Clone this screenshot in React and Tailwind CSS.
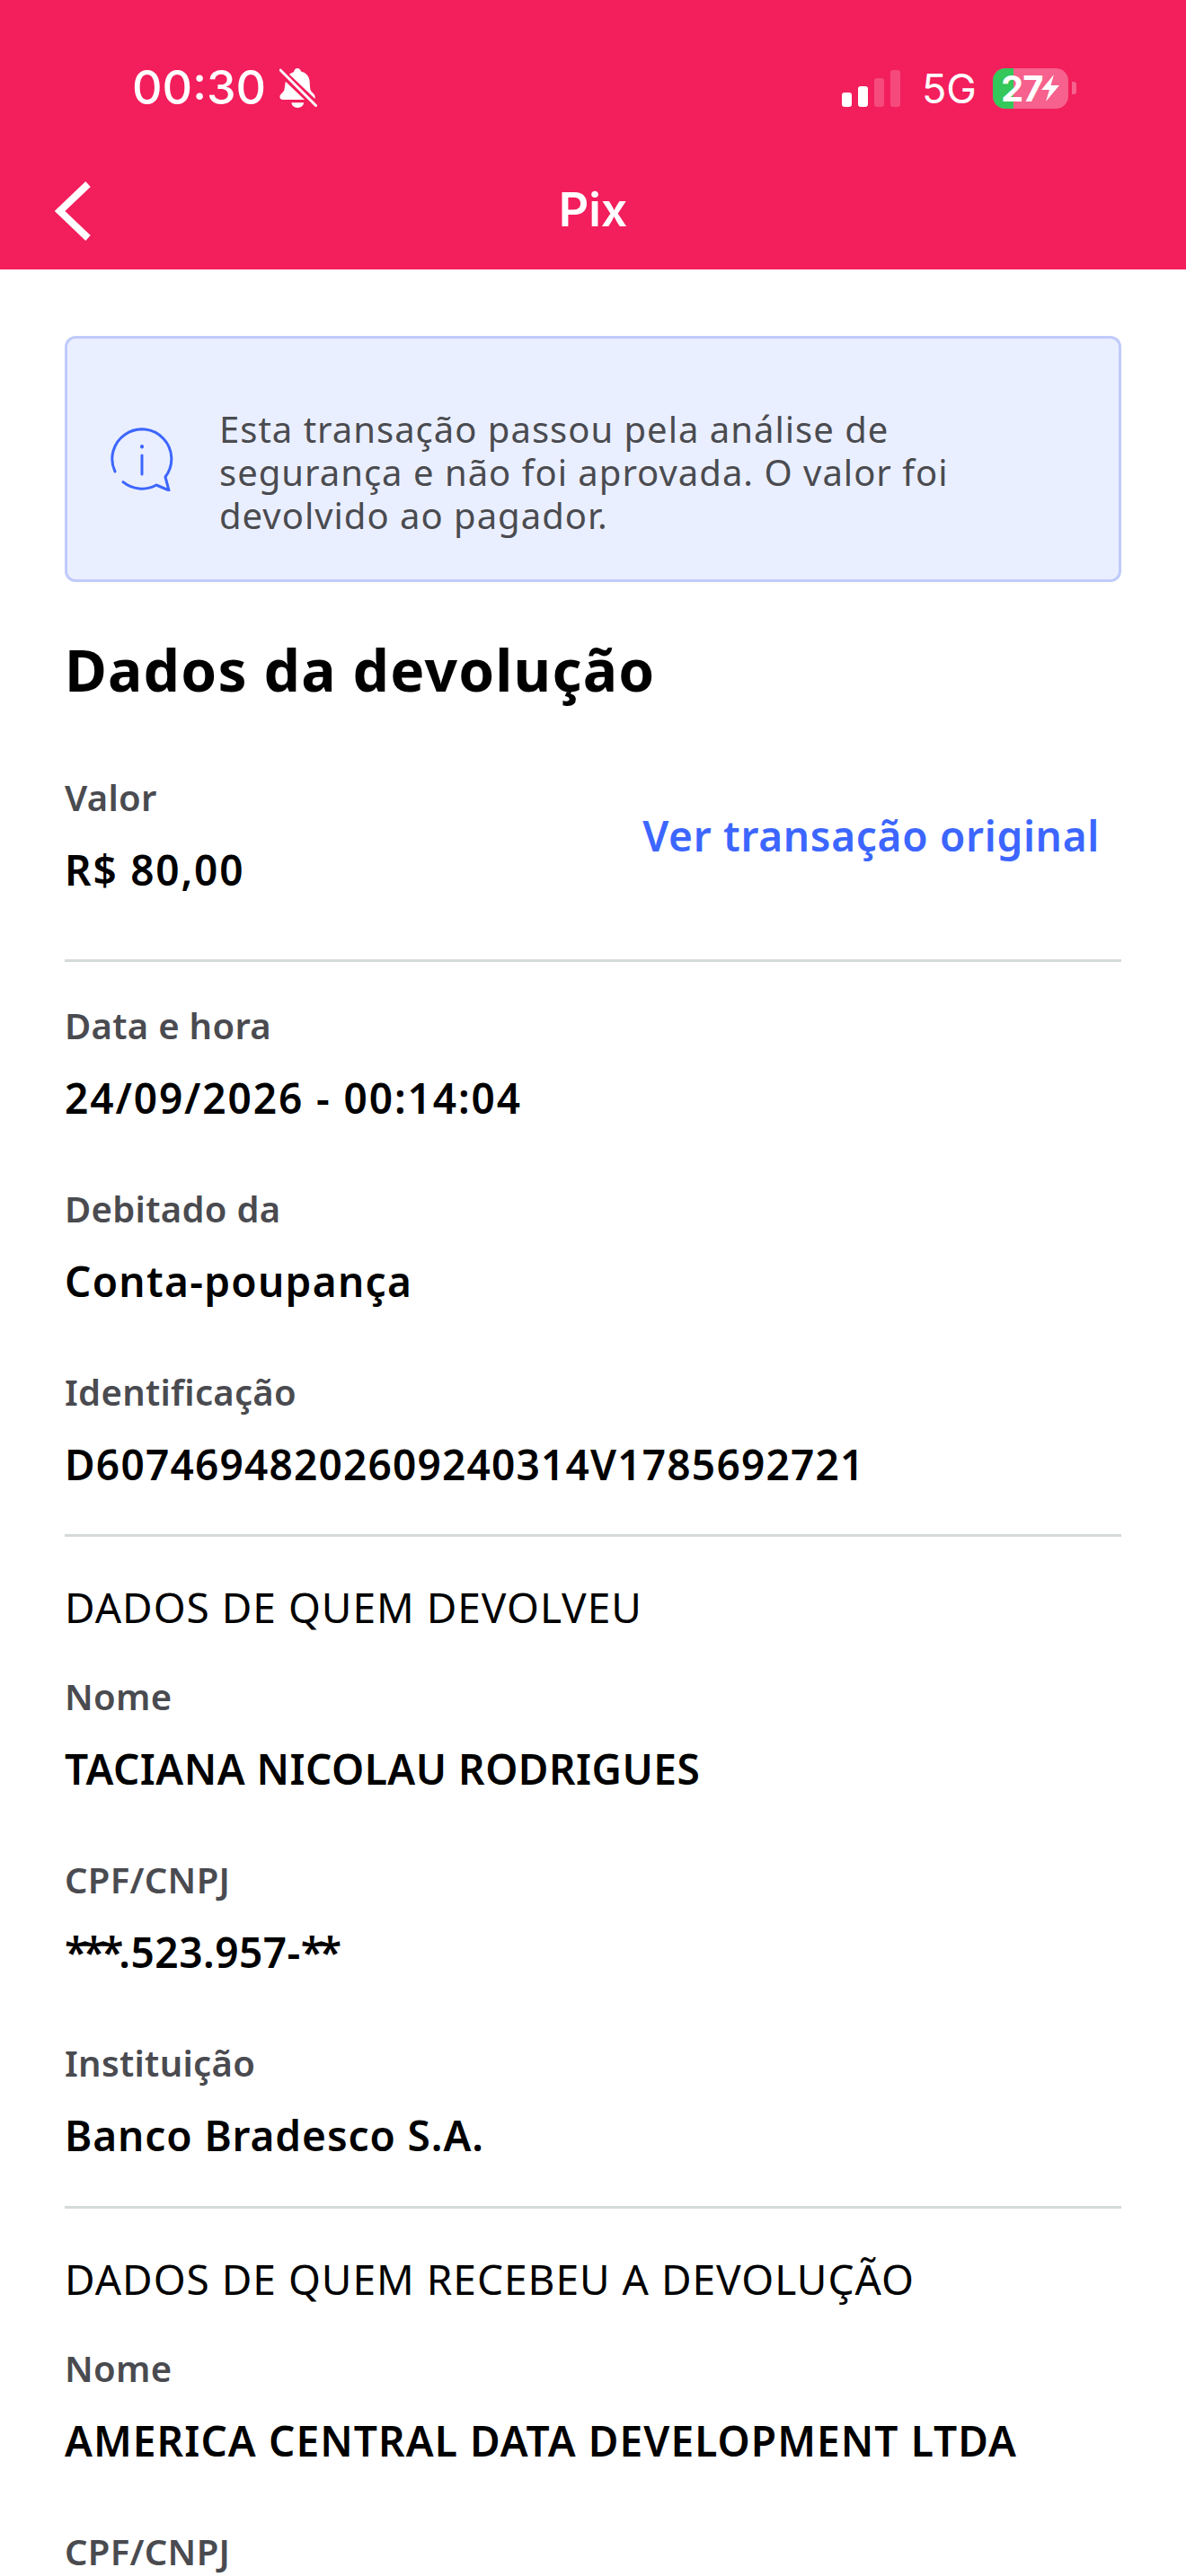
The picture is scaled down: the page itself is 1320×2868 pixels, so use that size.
import React from 'react';

const Field = ({ label, value, className = '', valueClass = 'tracking-[1px]' }) => (
  <div className={className}>
    <p className="h-12 text-[40px] leading-[48px] font-semibold tracking-[0.3px] text-[#4a4b50]">{label}</p>
    {value && (
      <p className={`mt-[28px] h-14 text-[46px] leading-[56px] font-semibold text-black whitespace-nowrap ${valueClass}`}>{value}</p>
    )}
  </div>
);

const Divider = ({ className = '' }) => <div className={`h-[3px] bg-[#d5dada] ${className}`} />;

const Section = ({ title, className = '' }) => (
  <p className={`h-14 text-[46px] leading-[56px] tracking-[1px] text-black whitespace-nowrap ${className}`}>{title}</p>
);

const BellOff = () => (
  <svg width="42" height="44" viewBox="0 0 42 44" fill="white" className="ml-[15px]">
    <path d="M1 2 L40.5 41.5" stroke="white" strokeWidth="3" strokeLinecap="round" />
    <path d="M11 6.7 C13 5 15 4.5 16 4 C16.5 1.5 18 0 20 0 C22 0 23.5 1.5 24 3.5 C30 5 33 9 33.6 14 C34 20 34 23 35 25 C36.5 27.5 40.5 29 39.6 34 Z" />
    <path d="M6.8 14.7 L28 35 L4 35 C1.5 35 0 33.5 0.5 31 C1 28.5 4.5 27 5.4 24 C6 21 6.3 18 6.8 14.7 Z" />
    <path d="M13.5 38.3 H27 C27 41.5 24 44 20.2 44 C16.5 44 13.5 41.5 13.5 38.3 Z" />
  </svg>
);

const Signal = () => (
  <div className="flex items-end gap-[7px] h-[41px]">
    <div className="w-[11px] h-4 rounded-[3px] bg-white" />
    <div className="w-[11px] h-[23px] rounded-[3px] bg-white" />
    <div className="w-[11px] h-8 rounded-[3px] bg-white/20" />
    <div className="w-[11px] h-[41px] rounded-[3px] bg-white/20" />
  </div>
);

const Battery = () => (
  <div className="flex items-center gap-[4px]">
    <div className="relative w-[84px] h-[45px] rounded-[14px] bg-white/30">
      <div className="absolute left-0 top-0 bottom-0 w-[23px] rounded-l-[14px] bg-[#34c759]" />
      <div className="absolute inset-0 flex items-center pl-[9px]">
        <span className="text-[40px] leading-[45px] font-bold text-white tracking-[-1px]">27</span>
        <svg width="20" height="30" viewBox="0 0 20 30" fill="white" className="ml-[-1px]">
          <path d="M14 0 L0 17 H9 L5 30 L20 12 H10.5 Z" />
        </svg>
      </div>
    </div>
    <div className="w-[5px] h-[14px] rounded-r-[3px] bg-white/30" />
  </div>
);

const InfoBubble = () => (
  <svg width="71" height="71" viewBox="0 0 71 71" fill="none" stroke="#3c66ff" strokeWidth="3" strokeLinecap="round" strokeLinejoin="round" className="shrink-0">
    <path d="M5 49 A33 33 0 1 1 61 55 L65 70 L51 64 A33 33 0 0 1 14 60.7" />
    <path d="M35 31 V52" />
    <path d="M35 21 V21.5" strokeWidth="4" />
  </svg>
);

export default function App() {
  return (
    <div className="w-[1320px] h-[2868px] overflow-hidden bg-white font-['Noto_Sans',sans-serif]">
      {/* Header */}
      <div className="h-[300px] bg-[#f31e5c] text-white">
        <div className="h-[170px] pt-[26px] flex items-center pl-[147px] pr-[122px] justify-between font-['Inter',sans-serif]">
          <div className="flex items-center">
            <span className="text-[52px] leading-none font-medium">00:30</span>
            <BellOff />
          </div>
          <div className="flex items-center">
            <Signal />
            <span className="ml-[24px] w-[56px] text-[45px] leading-none font-normal">5G</span>
            <div className="ml-[23px]"><Battery /></div>
          </div>
        </div>
        <div className="relative h-[130px] flex items-center justify-center">
          <svg width="40" height="66" viewBox="0 0 40 66" fill="none" stroke="white" strokeWidth="8" className="absolute left-[61px] top-[32px]">
            <path d="M37 3 L5.5 33 L37 63" />
          </svg>
          <span className="text-[52px] leading-none font-semibold font-['Inter',sans-serif] -mt-[2px]">Pix</span>
        </div>
      </div>

      <div className="px-[72px]">
        {/* Aviso */}
        <div className="mt-[74px] h-[274px] flex items-center gap-[50px] pl-[48px] rounded-xl border-[3px] border-[#c0cbfb] bg-[#eaefff]">
          <InfoBubble />
          <p className="max-w-[900px] pt-[30px] text-[40px] leading-[48px] tracking-[1px] text-[#4a4b50]">
            Esta transação passou pela análise de segurança e não foi aprovada. O valor foi devolvido ao pagador.
          </p>
        </div>

        <h1 className="mt-[58px] h-20 text-[64px] leading-[80px] font-bold tracking-[1.2px] text-black">Dados da devolução</h1>

        <div className="mt-[78px] flex items-center justify-between pr-6">
          <Field label="Valor" value="R$ 80,00" valueClass="tracking-[1.8px]" />
          <a className="text-[46px] leading-[56px] font-semibold tracking-[0.7px] text-[#3c66ff]">Ver transação original</a>
        </div>
        <Divider className="mt-[72px]" />

        <Field className="mt-[47px]" label="Data e hora" value="24/09/2026 - 00:14:04" valueClass="tracking-[1.9px]" />
        <Field className="mt-[72px]" label="Debitado da" value="Conta-poupança" valueClass="tracking-[1.3px]" />
        <Field className="mt-[72px]" label="Identificação" value="D60746948202609240314V1785692721" valueClass="tracking-[1.2px]" />
        <Divider className="mt-[50px]" />

        <Section className="mt-[50px]" title="DADOS DE QUEM DEVOLVEU" />
        <Field className="mt-[48px]" label="Nome" value="TACIANA NICOLAU RODRIGUES" valueClass="tracking-[0.5px]" />
        <Field
          className="mt-[72px]"
          label="CPF/CNPJ"
          value={<><span className="tracking-[-5px]">***</span>.523.957-<span className="tracking-[-5px]">**</span></>}
          valueClass="tracking-[0.5px]"
        />
        <Field className="mt-[72px]" label="Instituição" value="Banco Bradesco S.A." valueClass="tracking-[0.9px]" />
        <Divider className="mt-[51px]" />

        <Section className="mt-[50px]" title="DADOS DE QUEM RECEBEU A DEVOLUÇÃO" />
        <Field className="mt-[48px]" label="Nome" value="AMERICA CENTRAL DATA DEVELOPMENT LTDA" valueClass="tracking-[1.1px]" />
        <Field className="mt-[72px]" label="CPF/CNPJ" />
      </div>
    </div>
  );
}
